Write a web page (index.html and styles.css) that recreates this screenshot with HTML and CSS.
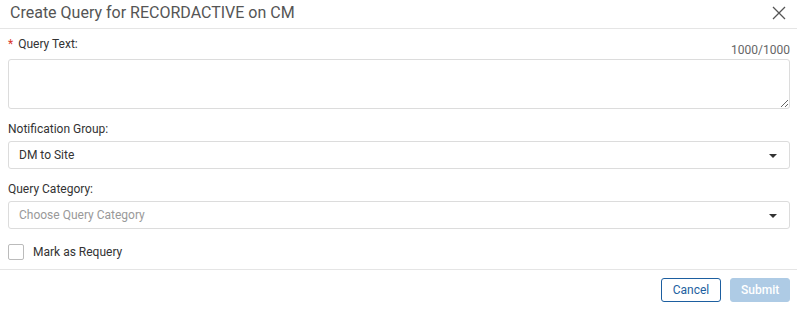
FILE: index.html
```html
<!DOCTYPE html>
<html lang="en">
<head>
    <meta charset="UTF-8">
    <title>Create Query</title>
    <link rel="stylesheet" href="styles.css">
</head>
<body>
    <div class="dialog">
        <div class="header">
            <h1>Create Query for RECORDACTIVE on CM</h1>
            <button class="close" aria-label="Close">
                <svg width="14" height="14" viewBox="0 0 14 14"><path d="M1 1L13 13M13 1L1 13" stroke="#555" stroke-width="1.3" fill="none"/></svg>
            </button>
        </div>

        <div class="content">
            <div class="field">
                <div class="label-row">
                    <label><span class="required">*</span>Query Text:</label>
                    <span class="counter">1000/1000</span>
                </div>
                <textarea class="text-input"></textarea>
            </div>

            <div class="field">
                <label>Notification Group:</label>
                <div class="select">
                    <span>DM to Site</span>
                    <span class="caret"></span>
                </div>
            </div>

            <div class="field">
                <label>Query Category:</label>
                <div class="select">
                    <span class="placeholder">Choose Query Category</span>
                    <span class="caret"></span>
                </div>
            </div>

            <div class="check-row">
                <span class="checkbox"></span>
                <span>Mark as Requery</span>
            </div>
        </div>

        <div class="footer">
            <button class="btn-cancel">Cancel</button>
            <button class="btn-submit" disabled>Submit</button>
        </div>
    </div>
</body>
</html>
```

FILE: styles.css
```css
body {
    margin: 0;
    padding: 0;
    font-family: Roboto, "Liberation Sans", sans-serif;
    background: #fff;
    color: #333;
}

.dialog {
    width: 797px;
}

.header {
    display: flex;
    align-items: center;
    justify-content: space-between;
    height: 29px;
    padding: 0 10px 0 10px;
    border-bottom: 1px solid #e5e5e5;
    box-sizing: border-box;
}

.header h1 {
    margin: 0;
    font-size: 16px;
    font-weight: 400;
    color: #555;
    padding-bottom: 3px;
}

.close {
    border: none;
    background: none;
    padding: 0;
    margin-right: 1px;
    margin-bottom: 2px;
    cursor: pointer;
    display: flex;
}

.content {
    padding: 8px 7px 0 8px;
}

.field {
    margin-bottom: 13px;
}

.field label {
    display: block;
    font-size: 12px;
    line-height: 14px;
    margin-bottom: 5px;
}

.label-row {
    display: flex;
    justify-content: space-between;
    align-items: flex-end;
}

.label-row label {
    margin-bottom: 8px;
}

.counter {
    font-size: 12px;
    color: #666;
    margin-bottom: 2px;
}

.required {
    color: #d9362b;
    margin-right: 5px;
}

.text-input {
    display: block;
    width: 100%;
    height: 50px;
    box-sizing: border-box;
    border: 1px solid #dcdcdc;
    border-radius: 3px;
    margin: 0;
    resize: vertical;
    font-family: inherit;
}

.select {
    display: flex;
    align-items: center;
    justify-content: space-between;
    height: 28px;
    box-sizing: border-box;
    padding: 0 12px 0 10px;
    border: 1px solid #dcdcdc;
    border-radius: 3px;
    font-size: 12px;
    color: #333;
}

.placeholder {
    color: #999;
}

.caret {
    width: 0;
    height: 0;
    border-left: 4px solid transparent;
    border-right: 4px solid transparent;
    border-top: 4px solid #333;
    margin-top: 1px;
}

.check-row {
    display: flex;
    align-items: center;
    gap: 9px;
    font-size: 12px;
    margin-top: 15px;
    height: 16px;
    padding-bottom: 9px;
}

.checkbox {
    width: 14px;
    height: 14px;
    border: 1px solid #bbb;
    border-radius: 2px;
}

.footer {
    display: flex;
    justify-content: flex-end;
    gap: 9px;
    padding: 8px 7px;
    border-top: 1px solid #e5e5e5;
}

.footer button {
    height: 24px;
    padding: 0 10px;
    border-radius: 3px;
    font-family: inherit;
    font-size: 12px;
    cursor: pointer;
}

.btn-cancel {
    width: 60px;
    background: #fff;
    color: #1d5fa0;
    border: 1px solid #1d5fa0;
}

.btn-submit {
    width: 60px;
    background: #aecbe5;
    color: #fff;
    border: 1px solid #aecbe5;
    font-weight: 500;
}
```
